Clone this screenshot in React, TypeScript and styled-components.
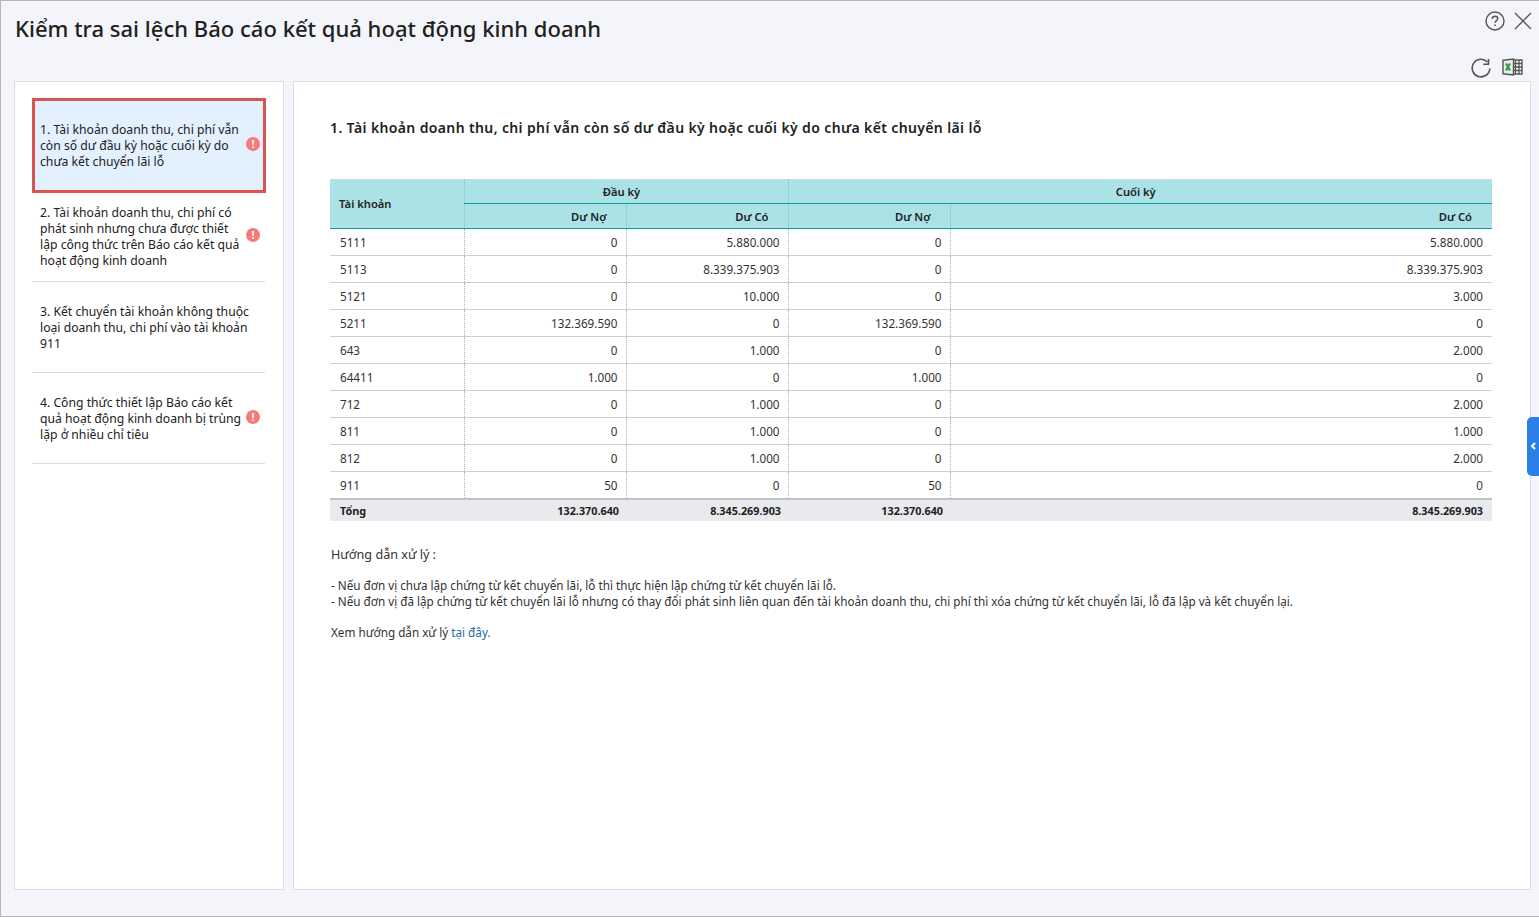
import React from 'react';
import styled, { createGlobalStyle } from 'styled-components';

const CHECKS = [
  { id: 1, label: '1. Tài khoản doanh thu, chi phí vẫn còn số dư đầu kỳ hoặc cuối kỳ do chưa kết chuyển lãi lỗ', warn: true },
  { id: 2, label: '2. Tài khoản doanh thu, chi phí có phát sinh nhưng chưa được thiết lập công thức trên Báo cáo kết quả hoạt động kinh doanh', warn: true },
  { id: 3, label: '3. Kết chuyển tài khoản không thuộc loại doanh thu, chi phí vào tài khoản 911', warn: false },
  { id: 4, label: '4. Công thức thiết lập Báo cáo kết quả hoạt động kinh doanh bị trùng lặp ở nhiều chỉ tiêu', warn: true },
];

const ROWS = [
  ['5111', '0', '5.880.000', '0', '5.880.000'],
  ['5113', '0', '8.339.375.903', '0', '8.339.375.903'],
  ['5121', '0', '10.000', '0', '3.000'],
  ['5211', '132.369.590', '0', '132.369.590', '0'],
  ['643', '0', '1.000', '0', '2.000'],
  ['64411', '1.000', '0', '1.000', '0'],
  ['712', '0', '1.000', '0', '2.000'],
  ['811', '0', '1.000', '0', '1.000'],
  ['812', '0', '1.000', '0', '2.000'],
  ['911', '50', '0', '50', '0'],
];

const App = () => (
  <Dialog>
    <GlobalStyle />
    <TitleBar>
      <Title>Kiểm tra sai lệch Báo cáo kết quả hoạt động kinh doanh</Title>
      <TitleActions>
        <svg width="20" height="20" viewBox="0 0 20 20" fill="none" stroke="#555" strokeWidth="1.4">
          <circle cx="10" cy="10" r="9" />
          <path d="M7.3 8c0-1.7 1.2-2.7 2.8-2.7 1.6 0 2.7 1 2.7 2.3 0 2-2.7 2.1-2.7 4.2" strokeWidth="1.5" />
          <path d="M10 13.4v1.7" strokeWidth="1.6" />
        </svg>
        <svg width="18" height="18" viewBox="0 0 18 18" fill="none" stroke="#555" strokeWidth="1.3">
          <path d="M1 1l16 16M17 1L1 17" />
        </svg>
      </TitleActions>
    </TitleBar>
    <Toolbar>
      <svg width="20" height="20" viewBox="0 0 20 20" fill="none" stroke="#555" strokeWidth="1.6">
        <path d="M18.8 10.5A8.8 8.8 0 1 1 16.4 4" />
        <path d="M17.5 1v5.2h-5.2" />
      </svg>
      <svg width="21" height="18" viewBox="0 0 21 18">
        <path d="M7 2h13v14H7z" fill="#fff" stroke="#555" strokeWidth="1.4" />
        <path d="M13.5 2v14M17 2v14M12 5.5h8M12 9h8M12 12.5h8" stroke="#555" strokeWidth="1.3" fill="none" />
        <path d="M1 2.2L11.5 1v16L1 15.8z" fill="#e9ecea" stroke="#555" strokeWidth="1.4" />
        <path d="M4 5.5l4 7M8 5.5l-4 7" stroke="#2f9e36" strokeWidth="2.2" fill="none" />
      </svg>
    </Toolbar>
    <Body>
      <Sidebar>
        {CHECKS.map(({ id, label, warn }) => (
          <CheckItem key={id} $active={id === 1}>
            <CheckLabel>{label}</CheckLabel>
            {warn && <WarnBadge>!</WarnBadge>}
          </CheckItem>
        ))}
      </Sidebar>
      <Content>
        <Heading>1. Tài khoản doanh thu, chi phí vẫn còn số dư đầu kỳ hoặc cuối kỳ do chưa kết chuyển lãi lỗ</Heading>
        <Table>
          <colgroup>
            <col style={{ width: 134 }} />
            <col style={{ width: 162 }} />
            <col style={{ width: 162 }} />
            <col style={{ width: 162 }} />
            <col />
          </colgroup>
          <thead>
            <tr>
              <HeadCell rowSpan={2} $align="left">Tài khoản</HeadCell>
              <GroupCell colSpan={2}>Đầu kỳ</GroupCell>
              <GroupCell colSpan={2}>Cuối kỳ</GroupCell>
            </tr>
            <tr>
              <HeadCell>Dư Nợ</HeadCell>
              <HeadCell>Dư Có</HeadCell>
              <HeadCell>Dư Nợ</HeadCell>
              <HeadCell>Dư Có</HeadCell>
            </tr>
          </thead>
          <tbody>
            {ROWS.map(([account, ...values]) => (
              <tr key={account}>
                <Cell $left>{account}</Cell>
                {values.map((value, i) => (
                  <Cell key={i}>{value}</Cell>
                ))}
              </tr>
            ))}
          </tbody>
          <tfoot>
            <tr>
              <TotalCell $left>Tổng</TotalCell>
              <TotalCell>132.370.640</TotalCell>
              <TotalCell>8.345.269.903</TotalCell>
              <TotalCell>132.370.640</TotalCell>
              <TotalCell>8.345.269.903</TotalCell>
            </tr>
          </tfoot>
        </Table>
        <GuideTitle>Hướng dẫn xử lý :</GuideTitle>
        <GuideText>
          - Nếu đơn vị chưa lập chứng từ kết chuyển lãi, lỗ thì thực hiện lập chứng từ kết chuyển lãi lỗ.
          <br />
          - Nếu đơn vị đã lập chứng từ kết chuyển lãi lỗ nhưng có thay đổi phát sinh liên quan đến tài khoản doanh thu, chi phí thì xóa chứng từ kết chuyển lãi, lỗ đã lập và kết chuyển lại.
        </GuideText>
        <GuideLink>
          Xem hướng dẫn xử lý <a href="#guide">tại đây.</a>
        </GuideLink>
      </Content>
    </Body>
    <SideHandle>
      <svg width="6" height="8" viewBox="0 0 6 8" fill="none" stroke="#fff" strokeWidth="2">
        <path d="M5 1L2 4l3 3" />
      </svg>
    </SideHandle>
  </Dialog>
);

export default App;

const GlobalStyle = createGlobalStyle`
  * {
    box-sizing: border-box;
  }

  html,
  body {
    margin: 0;
    height: 100%;
    overflow: hidden;
  }

  body {
    font-family: 'Noto Sans', 'Liberation Sans', sans-serif;
    color: #212121;
  }
`;

const Dialog = styled.div`
  position: relative;
  display: flex;
  flex-direction: column;
  width: 1539px;
  height: 917px;
  background: #f3f5fa;
  border: 1px solid #b4b4ba;
  border-right: 0;
`;

const TitleBar = styled.div`
  display: flex;
  justify-content: space-between;
  align-items: flex-start;
  height: 55px;
  padding: 10px 7px 0 14px;
`;

const Title = styled.h1`
  margin: 0;
  font-size: 22px;
  line-height: 34px;
  font-weight: 500;
  letter-spacing: 0.02px;
  color: #212121;
`;

const TitleActions = styled.div`
  display: flex;
  align-items: center;
  gap: 9px;
`;

const Toolbar = styled.div`
  display: flex;
  justify-content: flex-end;
  align-items: flex-start;
  gap: 11px;
  height: 25px;
  padding: 2px 16px 0 0;
`;

const Body = styled.div`
  display: flex;
  gap: 9px;
  height: 809px;
  padding: 0 8px 0 13px;
`;

const Sidebar = styled.div`
  width: 270px;
  padding: 16px 17px 0 17px;
  background: #fff;
  border: 1px solid #dcdde2;
`;

const CheckItem = styled.div<{ $active: boolean }>`
  display: flex;
  align-items: center;
  gap: 3px;
  min-height: ${({ $active }) => ($active ? '95px' : '91px')};
  margin-right: ${({ $active }) => ($active ? '0' : '1px')};
  margin-bottom: ${({ $active }) => ($active ? '-2px' : '0')};
  padding: ${({ $active }) => ($active ? '12px 3px 12px 5px' : '14px 5px 12px 8px')};
  background: ${({ $active }) => ($active ? '#e3f0fe' : 'transparent')};
  border: ${({ $active }) => ($active ? '3px solid #d9534f' : '0')};
  border-bottom: ${({ $active }) => ($active ? '3px solid #d9534f' : '1px solid #dcdde2')};
`;

const CheckLabel = styled.div`
  flex: 1;
  font-size: 12.2px;
  line-height: 16px;
  color: #212121;
`;

const WarnBadge = styled.span`
  flex: none;
  display: flex;
  align-items: center;
  justify-content: center;
  width: 14px;
  height: 14px;
  margin-bottom: 4px;
  border-radius: 50%;
  background: #f77a7a;
  color: #fff;
  font-size: 11px;
  font-weight: 700;
  line-height: 14px;
`;

const Content = styled.div`
  flex: 1;
  padding: 36px 38px 0 36px;
  background: #fff;
  border: 1px solid #dcdde2;
`;

const Heading = styled.h2`
  margin: 0 0 41px;
  font-size: 14px;
  line-height: 20px;
  font-weight: 600;
  letter-spacing: 0.37px;
  color: #212121;
`;

const Table = styled.table`
  width: 1162px;
  border-collapse: collapse;
  border-top: 1px solid #c8d8da;
  table-layout: fixed;
  font-size: 11.7px;
`;

const HeadCell = styled.th<{ $align?: string }>`
  height: 25px;
  padding: ${({ $align }) => ($align === 'left' ? '0 8px 2px 9px' : '0 19px 0 9px')};
  background: #abe2e6;
  border-left: ${({ $align }) => ($align === 'left' ? '0' : '1px solid #8fd2d8')};
  border-bottom: 1px solid #109ca6;
  text-align: ${({ $align }) => $align || 'right'};
  font-size: 11.2px;
  font-weight: 600;
  color: #212121;

  &:last-child {
    padding-right: 20px;
  }
`;

const GroupCell = styled.th`
  height: 24px;
  padding: 0 9px 0 0;
  background: #abe2e6;
  border-left: 1px solid #8fd2d8;
  border-bottom: 1px solid #109ca6;
  text-align: center;
  font-size: 11.2px;
  font-weight: 600;
  color: #212121;
`;

const Cell = styled.td<{ $left?: boolean }>`
  height: 27px;
  padding: 0 8px 0 10px;
  border-bottom: 1px solid #cfcfd2;
  border-left: ${({ $left }) => ($left ? '0' : '1px dotted #9fbcc0')};
  text-align: ${({ $left }) => ($left ? 'left' : 'right')};
  color: #333;

  &:last-child {
    padding-right: 9px;
  }
`;

const TotalCell = styled.td<{ $left?: boolean }>`
  height: 22px;
  padding: 0 7px 0 10px;
  background: #e9eaee;
  border-top: 2px solid #c2c2c6;
  text-align: ${({ $left }) => ($left ? 'left' : 'right')};
  font-size: 10.8px;
  font-weight: 700;
  color: #212121;

  &:last-child {
    padding-right: 9px;
  }
`;

const GuideTitle = styled.div`
  margin-top: 25px;
  padding-left: 1px;
  font-size: 12.6px;
  line-height: 18px;
  color: #333;
`;

const GuideText = styled.div`
  margin-top: 13px;
  padding-left: 1px;
  font-size: 11.7px;
  line-height: 16px;
  color: #333;
`;

const GuideLink = styled.div`
  margin-top: 15px;
  padding-left: 1px;
  font-size: 11.7px;
  line-height: 16px;
  color: #333;

  a {
    color: #1c6aa8;
    text-decoration: none;
  }
`;

const SideHandle = styled.div`
  position: absolute;
  top: 416px;
  right: 0;
  display: flex;
  align-items: center;
  justify-content: center;
  padding-bottom: 2px;
  width: 12px;
  height: 59px;
  background: #2a80e6;
  border-radius: 5px 0 0 5px;
`;
